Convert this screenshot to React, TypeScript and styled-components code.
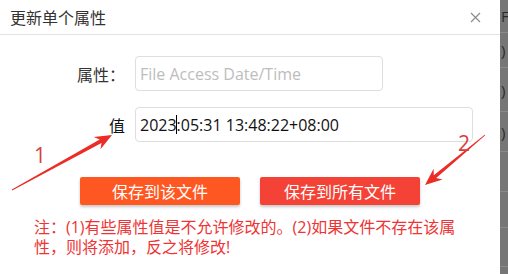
import React from 'react';
import styled, { createGlobalStyle } from 'styled-components';

const GlobalStyle = createGlobalStyle`
  html, body {
    margin: 0;
    padding: 0;
    background: #fff;
  }
  body {
    font-family: "Open Sans", "Noto Sans CJK SC", sans-serif;
  }
`;

const Page = styled.div`
  display: flex;
  width: 508px;
  height: 274px;
  overflow: hidden;
`;

const Dialog = styled.div`
  position: relative;
  width: 500px;
  flex-shrink: 0;
  background: #fff;
  display: flex;
  flex-direction: column;
`;

const Header = styled.div`
  height: 35px;
  box-sizing: border-box;
  display: flex;
  align-items: center;
  justify-content: space-between;
  padding: 0 19px 0 10px;
  border-bottom: 1px solid #e3e3e3;
`;

const Title = styled.div`
  font-size: 16px;
  color: #333;
`;

const CloseButton = styled.button`
  border: none;
  background: none;
  padding: 0;
  width: 11px;
  height: 11px;
  display: flex;
  cursor: pointer;
`;

const Body = styled.div`
  padding-top: 21px;
  display: flex;
  flex-direction: column;
`;

const Row = styled.div`
  display: flex;
  align-items: center;
  gap: 10px;
  margin-bottom: 16px;
`;

const Label = styled.label`
  width: 125px;
  text-align: right;
  font-size: 16px;
  color: ${(p: { $strong?: boolean }) => (p.$strong ? '#111' : '#333')};
`;

const TextInput = styled.input`
  box-sizing: border-box;
  width: ${(p: { $width: number }) => p.$width}px;
  height: 35px;
  padding: 0 4px;
  border: 1px solid #dedede;
  border-radius: 4px;
  font: inherit;
  font-size: 16px;
  color: #222;
  outline: none;
  &::placeholder {
    color: #bdbdbd;
  }
`;

const ValueBox = styled.div`
  box-sizing: border-box;
  width: ${(p: { $width: number }) => p.$width}px;
  height: 35px;
  padding: 0 4px;
  border: 1px solid #dedede;
  border-radius: 4px;
  display: flex;
  align-items: center;
  font-size: 16px;
  color: #111;
  white-space: pre;
`;

const Caret = styled.span`
  display: inline-block;
  width: 1px;
  height: 19px;
  margin: 0 -0.5px;
  background: #000;
`;

const Actions = styled.div`
  display: flex;
  gap: 20px;
  padding-left: 80px;
  margin-top: 19px;
`;

const ActionButton = styled.button`
  width: 160px;
  height: 28px;
  border: none;
  border-radius: 2px;
  background: ${(p: { $color: string }) => p.$color};
  color: #fff;
  font: inherit;
  font-size: 16px;
  box-shadow: 0 2px 3px rgba(0, 0, 0, 0.22);
  cursor: pointer;
`;

const Note = styled.p`
  margin: 12px 0 0;
  padding: 0 43px 0 34px;
  font-size: 16px;
  line-height: 20px;
  color: #ee3434;
`;

const Backdrop = styled.div`
  flex: 1;
  background: #767676;
  overflow: hidden;
  display: flex;
  flex-direction: column;
`;

const BackdropRow = styled.div`
  height: ${(p: { $h: number }) => p.$h}px;
  flex-shrink: 0;
  box-sizing: border-box;
  border-bottom: 1px solid #8a8a8a;
  display: flex;
  align-items: center;
  padding-left: 1px;
  font-size: 15px;
  color: #2a2a2a;
`;

const Overlay = styled.svg`
  position: absolute;
  left: 0;
  top: 0;
  pointer-events: none;
`;

const backdropRows = [
  { h: 33, t: 'F' },
  { h: 35, t: ')' },
  { h: 44, t: ')' },
  { h: 40, t: ')' },
  { h: 40, t: '' },
  { h: 36, t: '' },
  { h: 39, t: '' },
];

// tapered arrow polygon from tail to tip
function arrowPoints(x1: number, y1: number, x2: number, y2: number) {
  const dx = x2 - x1;
  const dy = y2 - y1;
  const len = Math.hypot(dx, dy);
  const ux = dx / len;
  const uy = dy / len;
  const nx = -uy;
  const ny = ux;
  const headLen = 17;
  const headW = 7;
  const bx = x2 - ux * headLen;
  const by = y2 - uy * headLen;
  const nb = x2 - ux * (headLen - 4);
  const nby = y2 - uy * (headLen - 4);
  const pts = [
    [x1 + nx * 0.4, y1 + ny * 0.4],
    [nb + nx * 1.9, nby + ny * 1.9],
    [bx + nx * headW, by + ny * headW],
    [x2, y2],
    [bx - nx * headW, by - ny * headW],
    [nb - nx * 1.9, nby - ny * 1.9],
    [x1 - nx * 0.4, y1 - ny * 0.4],
  ];
  return pts.map((p) => p.map((v) => v.toFixed(1)).join(',')).join(' ');
}

export default function App() {
  return (
    <Page>
      <GlobalStyle />
      <Dialog>
        <Header>
          <Title>更新单个属性</Title>
          <CloseButton aria-label="关闭">
            <svg width="11" height="11" viewBox="0 0 11 11">
              <path d="M1 1L10 10M10 1L1 10" stroke="#8c8c8c" strokeWidth="1.2" />
            </svg>
          </CloseButton>
        </Header>
        <Body>
          <Row>
            <Label>属性：</Label>
            <TextInput $width={248} placeholder="File Access Date/Time" />
          </Row>
          <Row>
            <Label $strong>值</Label>
            <ValueBox $width={338}>
              2023<Caret />:05:31 13:48:22+08:00
            </ValueBox>
          </Row>
          <Actions>
            <ActionButton $color="#ff5722">保存到该文件</ActionButton>
            <ActionButton $color="#f44336">保存到所有文件</ActionButton>
          </Actions>
          <Note>
            注：(1)有些属性值是不允许修改的。(2)如果文件不存在该属性，则将添加，反之将修改!
          </Note>
        </Body>
        <Overlay width="500" height="274" viewBox="0 0 500 274">
          <polygon points={arrowPoints(12, 190, 112, 135)} fill="#ec2d27" />
          <polygon points={arrowPoints(485, 135, 425, 185)} fill="#ec2d27" />
          <text x="34" y="163" fontSize="21" fill="#d2423c" fontFamily="Open Sans, sans-serif">1</text>
          <text x="458" y="151" fontSize="21" fill="#d2423c" fontFamily="Open Sans, sans-serif">2</text>
        </Overlay>
      </Dialog>
      <Backdrop>
        {backdropRows.map((r, i) => (
          <BackdropRow key={i} $h={r.h}>{r.t}</BackdropRow>
        ))}
      </Backdrop>
    </Page>
  );
}
